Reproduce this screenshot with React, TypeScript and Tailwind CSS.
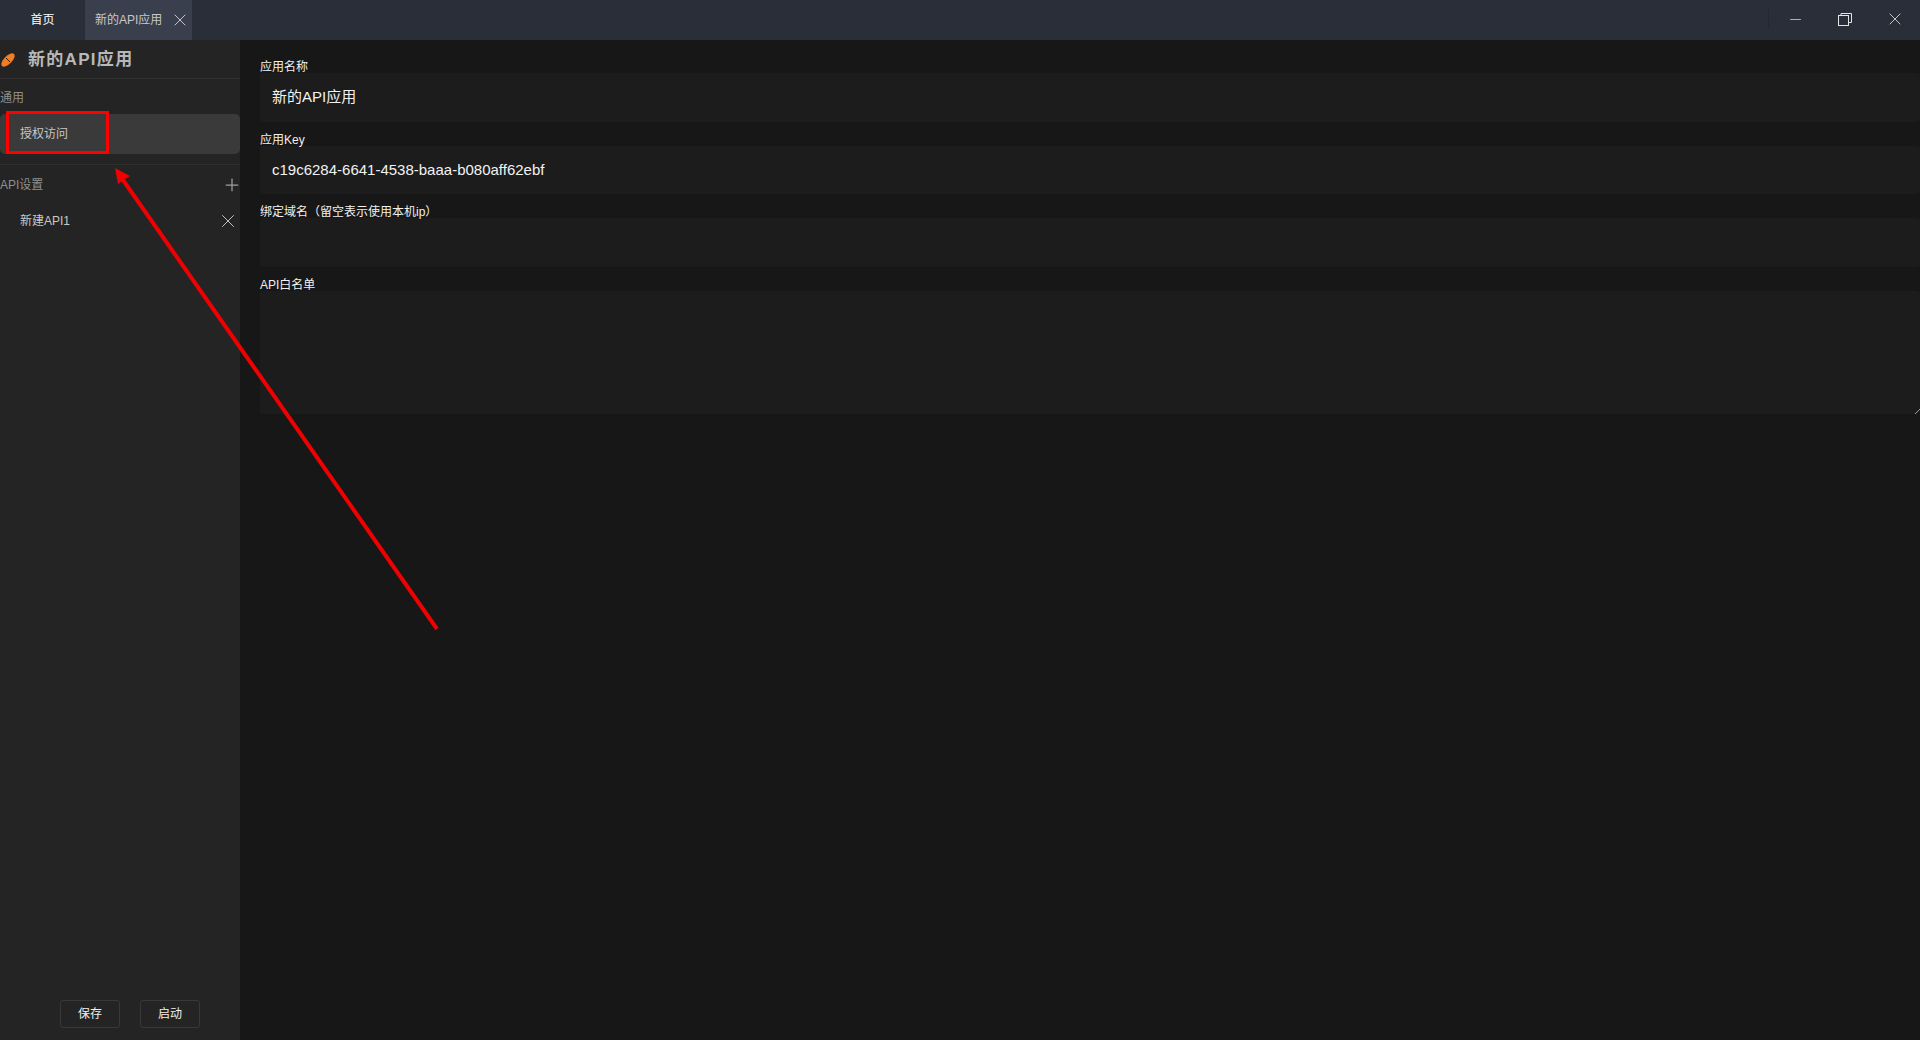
import { X, Plus, Minus } from 'lucide-react';

const font = { fontFamily: '"Liberation Sans", "Noto Sans CJK SC", sans-serif' };

const Field = ({ label, value, h }: { label: string; value?: string; h: string }) => (
    <div>
        <div className="h-[15px] text-[12px] leading-[18px] text-[#f0f0f0]">{label}</div>
        <div className={`${h} flex items-center rounded-[3px] bg-[#1c1c1c] pl-3 text-[15px] text-[#f2f2f2]`}>{value}</div>
    </div>
);

export default function App() {
    return (
        <div className="relative flex h-[1040px] w-[1920px] flex-col overflow-hidden bg-[#171717]" style={font}>
            {/* Title bar */}
            <div className="flex h-[40px] shrink-0 items-stretch bg-[#2a2e39] text-[12px]">
                <div className="flex w-[85px] items-center justify-center text-[#ffffff]">首页</div>
                <div className="flex w-[107px] items-center bg-[#3a3f4d] pl-[10px] text-[#c8c8c8]">
                    <span>新的API应用</span>
                    <X size={20} strokeWidth={1} className="ml-[8px] text-[#e0e0e0]" />
                </div>
                <div className="ml-auto flex items-center pb-[2px] text-[#e4e4e4]">
                    <div className="mr-px h-5 w-px bg-[#242731]" />
                    <div className="flex w-[50px] justify-center">
                        <Minus size={17} strokeWidth={1} />
                    </div>
                    <div className="flex w-[50px] justify-center">
                        <svg width="14" height="13" viewBox="0 0 14 13" fill="none" stroke="currentColor" strokeWidth="1">
                            <rect x="0.5" y="2.5" width="10" height="10" />
                            <path d="M3 2.5V0.5H13.5V9.5H10.5" />
                        </svg>
                    </div>
                    <div className="flex w-[50px] justify-center">
                        <X size={20} strokeWidth={1} />
                    </div>
                </div>
            </div>

            <div className="flex min-h-0 flex-1">
                {/* Sidebar */}
                <div className="flex w-[240px] shrink-0 flex-col bg-[#242424]">
                    <div className="flex h-[39px] shrink-0 items-center border-b border-[#2f2f2f] pt-[2px]">
                        <svg width="16" height="16" viewBox="0 0 16 16">
                            <ellipse cx="8" cy="8" rx="8.5" ry="4" transform="rotate(-45 8 8)" fill="#f57c1f" />
                            <path d="M6 6 L10 10" stroke="#242424" strokeWidth="1" />
                        </svg>
                        <span className="ml-[12px] text-[17px] font-bold tracking-[1.3px] text-[#b8b8b8]">新的API应用</span>
                    </div>
                    <div className="mt-[11px] h-[17px] text-[12px] leading-[17px] text-[#8f8f8f]">通用</div>
                    <div className="mt-[7px] flex h-[40px] shrink-0 items-center rounded-[5px] bg-[#3a3a3a] pl-5 text-[12px] text-[#c8c8c8]">授权访问</div>
                    <div className="mt-[10px] border-t border-[#2f2f2f]" />
                    <div className="mt-[11px] flex h-[17px] items-center justify-between text-[12px] text-[#8f8f8f]">
                        <span>API设置</span>
                        <Plus size={20} strokeWidth={1.5} className="-mr-[2px] text-[#a0a0a0]" />
                    </div>
                    <div className="mt-[15px] flex h-[26px] items-center justify-between pl-5 pr-px text-[12px] text-[#c8c8c8]">
                        <span>新建API1</span>
                        <X size={22} strokeWidth={1} className="text-[#d0d0d0]" />
                    </div>
                    <div className="mt-auto mb-[12px] ml-[60px] flex gap-5">
                        <button className="h-[28px] w-[60px] rounded-[3px] border border-[#383838] text-[12px] text-[#f0f0f0]">保存</button>
                        <button className="h-[28px] w-[60px] rounded-[3px] border border-[#383838] text-[12px] text-[#f0f0f0]">启动</button>
                    </div>
                </div>

                {/* Form */}
                <div className="flex min-w-0 flex-1 flex-col gap-[9px] pl-5 pt-[18px]">
                    <Field label="应用名称" value="新的API应用" h="h-[49px]" />
                    <Field label="应用Key" value="c19c6284-6641-4538-baaa-b080aff62ebf" h="h-[48px]" />
                    <Field label="绑定域名（留空表示使用本机ip）" h="h-[49px]" />
                    <div className="relative">
                        <Field label="API白名单" h="h-[123px]" />
                        <svg width="5" height="5" viewBox="0 0 5 5" className="absolute right-0 bottom-0 text-[#9a9a9a]">
                            <path d="M0 5L5 0" stroke="currentColor" strokeWidth="1" />
                        </svg>
                    </div>
                </div>
            </div>

            {/* Red annotations on top of the screenshot */}
            <div className="absolute left-[6px] top-[111px] h-[43px] w-[103px] border-[3px] border-[#ff0000]" />
            <svg width="1920" height="1040" className="pointer-events-none absolute left-0 top-0">
                <line x1="437" y1="629" x2="123" y2="180" stroke="#f00000" strokeWidth="4" />
                <path d="M115 168 L130 176 L118 184 Z" fill="#f00000" />
            </svg>
        </div>
    );
}
